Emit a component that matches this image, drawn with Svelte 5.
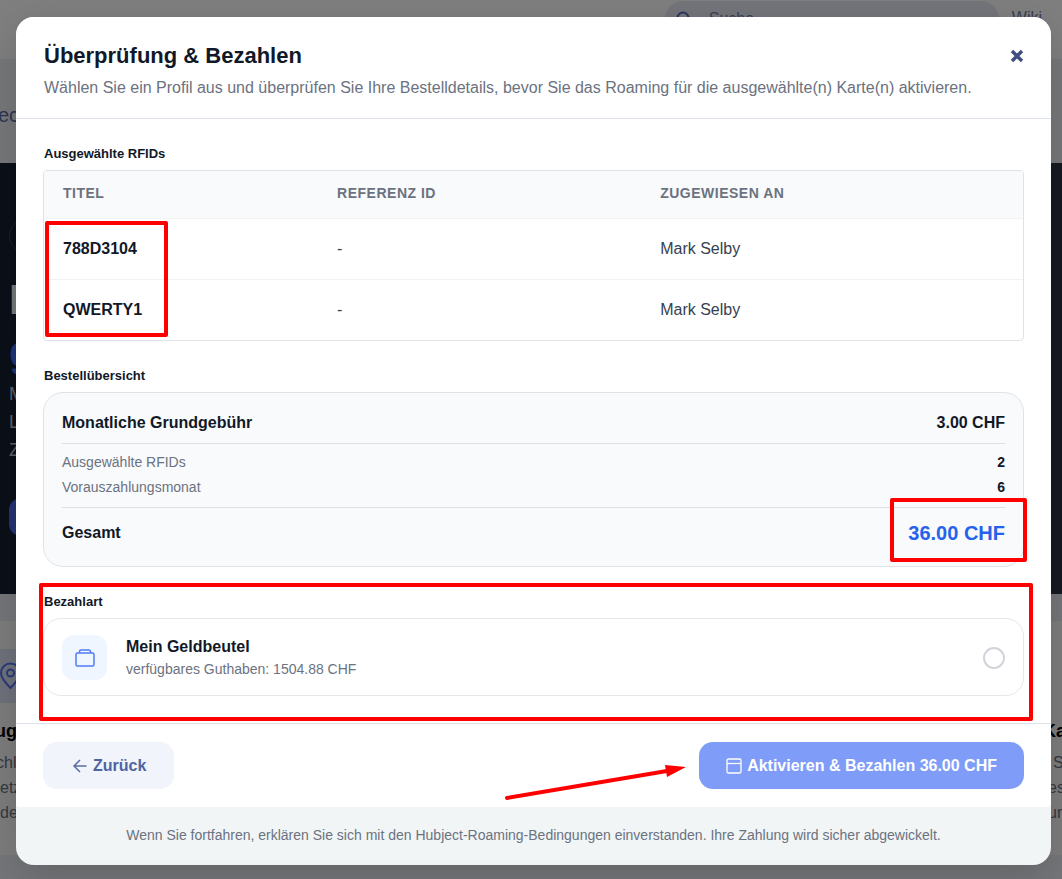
<script lang="ts">
	let cards = $state([
		{ title: '788D3104', reference: '-', assigned: 'Mark Selby' },
		{ title: 'QWERTY1', reference: '-', assigned: 'Mark Selby' }
	]);

	const fee = 3;
	const months = 6;
	const balance = 1504.88;

	let payment = $state('');
	let open = $state(true);
	let total = $derived(fee * months * cards.length);

	function chf(value: number) {
		return `${value.toFixed(2)} CHF`;
	}

	function close() {
		open = false;
	}
</script>

<div class="screen">
	<div class="page" aria-hidden="true">
		<div class="topbar">
			<div class="search">
				<svg width="18" height="18" viewBox="0 0 18 18">
					<circle cx="8" cy="8" r="5.5" fill="none" stroke="#5969b8" stroke-width="2" />
					<path d="M12 12l4 4" stroke="#5969b8" stroke-width="2" />
				</svg>
				<span>Suche</span>
			</div>
			<span class="wiki">Wiki</span>
		</div>
		<div class="subnav">ec</div>
		<div class="hero">
			<div class="hero-chip"></div>
			<div class="hero-title">I</div>
			<div class="hero-title blue">g</div>
			<div class="hero-text">M<br />L<br />Z</div>
			<div class="hero-button"></div>
		</div>
		<div class="features">
			<div class="feature">
				<div class="feature-icon">
					<svg width="24" height="28" viewBox="0 0 24 28" fill="none" stroke="#5475f5" stroke-width="2">
						<path d="M10.5 26C7 22 1 17 1 11a9.5 9.5 0 0 1 19 0c0 6-6 11-9.5 15z" />
						<circle cx="10.5" cy="11" r="3.5" />
					</svg>
				</div>
				<strong>ug</strong>
				<p>chli<br />etz<br />de</p>
			</div>
			<div class="feature right">
				<div class="feature-icon"></div>
				<strong>Ka</strong>
				<p>S<br />es<br />un</p>
			</div>
		</div>
	</div>
	<div class="backdrop"></div>

	{#if open}
		<div class="modal" role="dialog" aria-modal="true" aria-labelledby="modal-title">
			<header>
				<div>
					<h1 id="modal-title">Überprüfung &amp; Bezahlen</h1>
					<p>
						Wählen Sie ein Profil aus und überprüfen Sie Ihre Bestelldetails, bevor Sie das Roaming für
						die ausgewählte(n) Karte(n) aktivieren.
					</p>
				</div>
				<button class="close" aria-label="Schließen" onclick={close}>
					<svg width="14" height="14" viewBox="0 0 14 14">
						<path d="M2 2l10 10M12 2L2 12" stroke="#3f4f7f" stroke-width="3.4" />
					</svg>
				</button>
			</header>

			<div class="content">
				<section>
					<h2>Ausgewählte RFIDs</h2>
					<div class="table-box">
						<table>
							<thead>
								<tr>
									<th class="col-title">Titel</th>
									<th class="col-ref">Referenz ID</th>
									<th>Zugewiesen an</th>
								</tr>
							</thead>
							<tbody>
								{#each cards as card}
									<tr>
										<td><strong>{card.title}</strong></td>
										<td>{card.reference}</td>
										<td>{card.assigned}</td>
									</tr>
								{/each}
							</tbody>
						</table>
						<div class="mark mark-cards"></div>
					</div>
				</section>

				<section>
					<h2>Bestellübersicht</h2>
					<div class="summary">
						<div class="fee">
							<span>Monatliche Grundgebühr</span>
							<span>{chf(fee)}</span>
						</div>
						<div class="details">
							<div><span>Ausgewählte RFIDs</span><strong>{cards.length}</strong></div>
							<div><span>Vorauszahlungsmonat</span><strong>{months}</strong></div>
						</div>
						<div class="total">
							<span>Gesamt</span>
							<span class="amount">{chf(total)}</span>
						</div>
						<div class="mark mark-total"></div>
					</div>
				</section>

				<section class="payment">
					<h2>Bezahlart</h2>
					<label class="wallet">
						<span class="wallet-icon">
							<svg width="20" height="18" viewBox="0 0 20 18" fill="none" stroke="#4f7cf7" stroke-width="1.5">
								<rect x="1" y="4" width="18" height="13" rx="1.5" />
								<path d="M4.5 4V2.500a1.500 1.500 0 0 1 1.500-1.500h8a1.500 1.500 0 0 1 1.500 1.500V4" />
							</svg>
						</span>
						<span class="wallet-text">
							<strong>Mein Geldbeutel</strong>
							<small>verfügbares Guthaben: {chf(balance)}</small>
						</span>
						<input type="radio" name="payment" value="wallet" bind:group={payment} />
					</label>
					<div class="mark mark-payment"></div>
				</section>
			</div>

			<div class="actions">
				<button class="back" onclick={close}>
					<svg width="14" height="14" viewBox="0 0 14 14" fill="none" stroke="#5a6ba3" stroke-width="1.5">
						<path d="M13.5 7H1.5M7 1L1 7l6 6" />
					</svg>
					Zurück
				</button>
				<button class="pay">
					<svg width="16" height="16" viewBox="0 0 16 16" fill="none" stroke="#fff" stroke-width="1.3">
						<rect x="1" y="1" width="14" height="14" rx="1.5" />
						<path d="M1 5.5h14" />
					</svg>
					Aktivieren &amp; Bezahlen {chf(total)}
				</button>
				<svg class="arrow" width="184" height="38" viewBox="0 0 184 38">
					<path d="M4 34L164 7" stroke="#ff0000" stroke-width="4" stroke-linecap="round" />
					<path d="M162 1l21 2-19 10z" fill="#ff0000" />
				</svg>
			</div>

			<footer>
				Wenn Sie fortfahren, erklären Sie sich mit den Hubject-Roaming-Bedingungen einverstanden. Ihre
				Zahlung wird sicher abgewickelt.
			</footer>
		</div>
	{/if}
</div>

<style>
	:global(body) {
		font-family: 'Liberation Sans', Arial, sans-serif;
		color: #111827;
	}

	.screen {
		position: relative;
		box-sizing: border-box;
		min-height: 100vh;
		padding: 17px 11px 14px 16px;
		overflow: hidden;
	}

	.page,
	.backdrop {
		position: absolute;
		inset: 0;
		overflow: hidden;
	}

	.page {
		background: #ebedf2;
	}

	.backdrop {
		background: rgba(0, 0, 0, 0.5);
	}

	.topbar {
		display: flex;
		justify-content: flex-end;
		box-sizing: border-box;
		height: 59px;
		padding: 1px 20px 0 0;
		background: #fff;
	}

	.search {
		display: flex;
		align-items: center;
		gap: 16px;
		box-sizing: border-box;
		width: 334px;
		height: 36px;
		padding: 0 10px;
		border-radius: 18px;
		background: #e7eaf5;
		color: #7480a8;
	}

	.wiki {
		margin-left: 13px;
		line-height: 34px;
		color: #7480a8;
	}

	.subnav {
		box-sizing: border-box;
		height: 104px;
		padding-top: 45px;
		background: #eef0f4;
		color: #5969a8;
		font-size: 20px;
		text-indent: -2px;
	}

	.hero {
		box-sizing: border-box;
		height: 431px;
		padding: 56px 0 0 9px;
		background: linear-gradient(90deg, #161e30, #2c3444 92%);
		color: #f1f3f6;
	}

	.hero-chip {
		width: 200px;
		height: 32px;
		border: 1px solid #38415a;
		border-radius: 17px;
	}

	.hero-title {
		height: 52px;
		margin-top: 21px;
		font-size: 42px;
		font-weight: bold;
		line-height: 52px;
	}

	.hero-title.blue {
		margin-top: 0;
		color: #3d6cf0;
	}

	.hero-text {
		margin-top: 2px;
		font-size: 18px;
		line-height: 28px;
		color: #bcc2cc;
	}

	.hero-button {
		width: 200px;
		height: 38px;
		margin-top: 34px;
		border-radius: 12px;
		background: #4867e8;
	}

	.features {
		display: flex;
		justify-content: space-between;
		height: 234px;
		margin-top: 27px;
		background: #fbfbfb;
	}

	.feature {
		width: 24px;
		padding-top: 28px;
		color: #6b7280;
	}

	.feature-icon {
		display: flex;
		align-items: center;
		height: 54px;
		background: #dfe5f7;
	}

	.feature strong {
		display: block;
		margin-top: 18px;
		font-size: 18px;
		line-height: 20px;
		text-indent: -5px;
		color: #000;
	}

	.feature p {
		margin: 9px 0 0;
		font-size: 16px;
		line-height: 25px;
		text-indent: -4px;
	}

	.feature.right {
		width: 14px;
	}

	.right .feature-icon {
		background: none;
	}

	.feature.right p {
		text-indent: 5px;
	}

	.modal {
		position: relative;
		overflow: hidden;
		border-radius: 18px;
		background: #f1f5f6;
		box-shadow: 0 12px 40px rgba(0, 0, 0, 0.16);
	}

	header {
		display: flex;
		justify-content: space-between;
		align-items: flex-start;
		padding: 23px 27px 19px 28px;
		border-bottom: 1px solid #dee2ec;
		background: #fff;
	}

	h1 {
		margin: 0;
		font-size: 22px;
		line-height: 32px;
	}

	header p {
		margin: 4px 0 0;
		font-size: 16px;
		line-height: 23px;
		color: #6b7280;
	}

	button {
		border: none;
		font-family: inherit;
		cursor: pointer;
	}

	.close {
		display: flex;
		padding: 9px 0;
		background: none;
	}

	.content {
		padding: 24px 27px 27px;
		background: #fff;
	}

	section {
		position: relative;
		margin-bottom: 24px;
	}

	section:last-child {
		margin-bottom: 0;
	}

	h2 {
		margin: 0 0 5px 1px;
		font-size: 13px;
		line-height: 22px;
	}

	.table-box {
		position: relative;
		border: 1px solid #dfe3e8;
		border-radius: 4px;
		overflow: hidden;
	}

	table {
		width: 100%;
		border-collapse: collapse;
		table-layout: fixed;
	}

	.col-title {
		width: 28%;
	}

	.col-ref {
		width: 33%;
	}

	th,
	td {
		box-sizing: border-box;
		padding: 0 19px;
	}

	th {
		height: 47px;
		padding-bottom: 2px;
		background: #f9fafc;
		font-size: 14px;
		letter-spacing: 0.5px;
		text-align: left;
		text-transform: uppercase;
		color: #6b7280;
	}

	td {
		height: 61px;
		border-top: 1px solid #f0f2f4;
		font-size: 16px;
		color: #374151;
	}

	td strong {
		color: #111827;
	}

	.summary {
		position: relative;
		padding: 17px 18px 16px;
		border: 1px solid #dfe3e8;
		border-radius: 20px;
		background: #f9fafc;
	}

	.fee,
	.total,
	.details div {
		display: flex;
		justify-content: space-between;
		align-items: center;
	}

	.fee {
		padding-bottom: 8px;
		font-size: 16px;
		font-weight: bold;
		line-height: 25px;
	}

	.details {
		padding: 6px 0 7px;
		border-top: 1px solid #dfe1e5;
		border-bottom: 1px solid #dfe1e5;
		font-size: 14px;
		line-height: 25px;
		color: #6b7280;
	}

	.details strong {
		color: #111827;
	}

	.total {
		padding-top: 8px;
		font-weight: bold;
		line-height: 34px;
	}

	.amount {
		font-size: 20px;
		color: #2563eb;
	}

	.wallet {
		display: flex;
		align-items: center;
		padding: 16px 18px 15px;
		border: 1px solid #e5e7eb;
		border-radius: 18px;
		cursor: pointer;
	}

	.wallet-icon {
		display: flex;
		justify-content: center;
		align-items: center;
		width: 45px;
		height: 45px;
		border-radius: 12px;
		background: #eff6ff;
	}

	.wallet-text {
		flex: 1;
		padding-left: 19px;
	}

	.wallet strong,
	.wallet small {
		display: block;
		font-size: 16px;
		line-height: 22px;
	}

	.wallet small {
		font-size: 14px;
		color: #6b7280;
	}

	input {
		appearance: none;
		width: 22px;
		height: 22px;
		margin: 0;
		border: 2px solid #d1d5db;
		border-radius: 50%;
	}

	input:checked {
		border: 7px solid #2563eb;
	}

	.actions {
		position: relative;
		display: flex;
		justify-content: space-between;
		padding: 18px 27px;
		border-top: 1px solid #dee0ea;
		border-radius: 0 0 4px 4px;
		background: #fff;
	}

	.actions button {
		display: flex;
		justify-content: center;
		align-items: center;
		height: 47px;
		border-radius: 14px;
		font-size: 16px;
		font-weight: bold;
	}

	.back {
		gap: 6px;
		padding: 0 28px 0 30px;
		background: #f1f4fa;
		color: #5063a0;
	}

	.pay {
		gap: 5px;
		padding: 0 27px;
		background: #7e9cf8;
		color: #fff;
	}

	footer {
		padding: 17px 27px 19px;
		font-size: 14px;
		line-height: 22px;
		text-align: center;
		color: #6b7280;
	}

	/* red markers drawn over the dialog */
	.mark {
		position: absolute;
		border: 4px solid #ff0000;
		border-radius: 2px;
		pointer-events: none;
	}

	.mark-cards {
		top: 50px;
		left: 1px;
		width: 115px;
		height: 108px;
	}

	.mark-total {
		right: -4px;
		bottom: 4px;
		width: 129px;
		height: 56px;
	}

	.mark-payment {
		inset: -8px -9px -25px -4px;
	}

	.arrow {
		position: absolute;
		right: 364px;
		bottom: 5px;
	}
</style>
